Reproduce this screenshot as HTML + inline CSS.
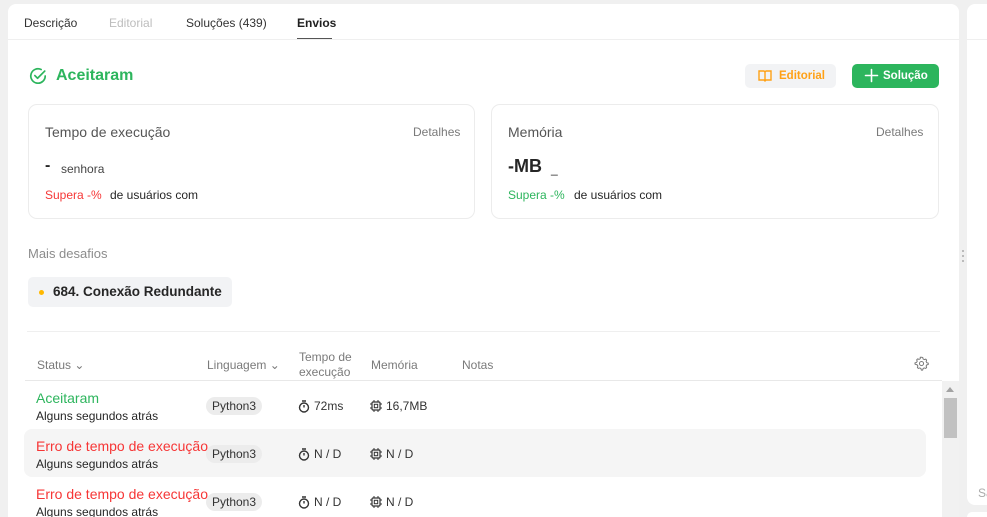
<!DOCTYPE html>
<html><head><meta charset="utf-8"><style>
*{margin:0;padding:0;box-sizing:border-box}
html,body{width:987px;height:517px;overflow:hidden}
body{background:#f0f0f0;font-family:"Liberation Sans",sans-serif;position:relative;color:#262626}
.a{position:absolute;white-space:nowrap}
#main{position:absolute;left:8px;top:4px;width:951px;height:513px;background:#fff;border-radius:8px 8px 0 0;overflow:hidden}
#rp{position:absolute;left:967px;top:4px;width:30px;height:501px;background:#fff;border-radius:8px}
#rp2{position:absolute;left:967px;top:512px;width:30px;height:10px;background:#fff;border-radius:8px}
.tab{font-size:12px;top:12px}
.card{position:absolute;border:1px solid #ececec;border-radius:9px;background:#fff}
.hd{font-size:12px;color:#7a7a7a}
.st{font-size:12px;color:#262626}
.pill{position:absolute;background:#ececec;border-radius:10px;font-size:12px;color:#333;height:18px;line-height:18px;padding:0 6px}
.ic{font-size:12px;color:#333}
</style></head><body>
<div id="main">
  <div class="a tab" style="left:16px;color:#333">Descrição</div>
  <div class="a tab" style="left:101px;color:#bdbdbd">Editorial</div>
  <div class="a tab" style="left:178px;color:#333">Soluções (439)</div>
  <div class="a tab" style="left:289px;color:#1f1f1f;font-weight:700">Envios</div>
  <div class="a" style="left:289px;top:34px;width:35px;height:2px;background:#555"></div>
  <div class="a" style="left:0;top:35px;width:951px;height:1px;background:#efefef"></div>

  <svg class="a" style="left:21px;top:63px" width="18" height="18" viewBox="0 0 20 20"><path d="M18 10A8 8 0 1 1 13.5 2.8" fill="none" stroke="#2db55d" stroke-width="1.9" stroke-linecap="round"/><path d="M6.5 9.5l3 3 8-8" fill="none" stroke="#2db55d" stroke-width="1.9" stroke-linecap="round" stroke-linejoin="round"/></svg>
  <div class="a" style="left:48px;top:63px;font-size:16px;font-weight:700;color:#2db55d">Aceitaram</div>

  <div class="a" style="left:737px;top:60px;width:91px;height:24px;background:#f2f3f5;border-radius:5px"></div>
  <svg class="a" style="left:750px;top:66px" width="14" height="12" viewBox="0 0 14 12"><path d="M1 1h5l1 1 1-1h5v9H8l-1 1-1-1H1z M7 2v8" fill="none" stroke="#ffa116" stroke-width="1.4"/></svg>
  <div class="a" style="left:771px;top:66px;font-size:11.5px;font-weight:700;color:#ffa116">Editorial</div>
  <div class="a" style="left:844px;top:60px;width:87px;height:24px;background:#2cb55d;border-radius:5px"></div>
  <svg class="a" style="left:856px;top:64px" width="15" height="15" viewBox="0 0 15 15"><path d="M7.5 1.5v12M1.5 7.5h12" stroke="#fff" stroke-width="1.6" stroke-linecap="round"/></svg>
  <div class="a" style="left:875px;top:66px;font-size:11.5px;font-weight:700;color:#fff">Solução</div>

  <div class="card" style="left:20px;top:100px;width:447px;height:115px"></div>
  <div class="a" style="left:37px;top:120px;font-size:14px;color:#555">Tempo de execução</div>
  <div class="a hd" style="left:405px;top:121px">Detalhes</div>
  <div class="a" style="left:37px;top:153px;font-size:16px;font-weight:700;color:#262626">-</div>
  <div class="a" style="left:53px;top:158px;font-size:12px;color:#444">senhora</div>
  <div class="a" style="left:37px;top:184px;font-size:12px;color:#f63636">Supera -%</div>
  <div class="a" style="left:102px;top:184px;font-size:12px;color:#262626">de usuários com</div>

  <div class="card" style="left:483px;top:100px;width:448px;height:115px"></div>
  <div class="a" style="left:500px;top:120px;font-size:14px;color:#555">Memória</div>
  <div class="a hd" style="left:868px;top:121px">Detalhes</div>
  <div class="a" style="left:500px;top:152px;font-size:18px;font-weight:600;color:#262626">-MB</div>
  <div class="a" style="left:543px;top:158px;font-size:12px;color:#262626">_</div>
  <div class="a" style="left:500px;top:184px;font-size:12px;color:#2db55d">Supera -%</div>
  <div class="a" style="left:566px;top:184px;font-size:12px;color:#262626">de usuários com</div>

  <div class="a" style="left:20px;top:242px;font-size:13px;color:#8c8c8c">Mais desafios</div>
  <div class="a" style="left:20px;top:273px;width:204px;height:30px;background:#f2f3f5;border-radius:5px"></div>
  <div class="a" style="left:31px;top:286px;width:5px;height:5px;border-radius:50%;background:#ffb800"></div>
  <div class="a" style="left:45px;top:280px;font-size:13.5px;font-weight:600;color:#262626">684. Conexão Redundante</div>

  <div class="a" style="left:19px;top:327px;width:913px;height:1px;background:#efefef"></div>

  <div class="a hd" style="left:29px;top:354px">Status ⌄</div>
  <div class="a hd" style="left:199px;top:354px">Linguagem ⌄</div>
  <div class="a hd" style="left:291px;top:346px;line-height:15px;white-space:normal;width:60px">Tempo de execução</div>
  <div class="a hd" style="left:363px;top:354px">Memória</div>
  <div class="a hd" style="left:454px;top:354px">Notas</div>
  <svg class="a" style="left:906px;top:352px" width="15" height="15" viewBox="0 0 24 24"><path d="M12 2l2 .3.6 2.5 1.8 1 2.4-.8 1.4 1.5-.8 2.4 1 1.8 2.4.7v2.2l-2.4.6-1 1.8.8 2.4-1.5 1.5-2.4-.8-1.8 1-.6 2.4h-2.2l-.6-2.4-1.8-1-2.4.8-1.5-1.5.8-2.4-1-1.8L1.6 13v-2.1l2.5-.6 1-1.8-.8-2.4 1.5-1.5 2.4.8 1.8-1L10 2z" fill="none" stroke="#777" stroke-width="1.6" stroke-linejoin="round"/><circle cx="12" cy="12" r="3.3" fill="none" stroke="#777" stroke-width="1.6"/></svg>
  <div class="a" style="left:17px;top:376px;width:917px;height:1px;background:#e8e8e8"></div>

  <div class="a" style="left:16px;top:425px;width:902px;height:48px;background:#f5f5f5;border-radius:8px"></div>

  <div class="a" style="left:28px;top:386px;font-size:14px;color:#2db55d">Aceitaram</div>
  <div class="a st" style="left:28px;top:405px">Alguns segundos atrás</div>
  <div class="pill" style="left:198px;top:393px">Python3</div>
  <svg class="a" style="left:290px;top:396px" width="12" height="13" viewBox="0 0 12 13"><circle cx="6" cy="7.5" r="4.5" fill="none" stroke="#333" stroke-width="1.4"/><path d="M4 1h4M6 7.5V5" stroke="#333" stroke-width="1.4"/></svg>
  <div class="a ic" style="left:306px;top:395px">72ms</div>
  <svg class="a" style="left:362px;top:396px" width="12" height="12" viewBox="0 0 12 12"><rect x="2" y="2" width="8" height="8" rx="1" fill="none" stroke="#333" stroke-width="1.2"/><rect x="4.3" y="4.3" width="3.4" height="3.4" fill="none" stroke="#333" stroke-width="1"/><path d="M4 0v2M8 0v2M4 10v2M8 10v2M0 4h2M0 8h2M10 4h2M10 8h2" stroke="#333"/></svg>
  <div class="a ic" style="left:378px;top:395px">16,7MB</div>

  <div class="a" style="left:28px;top:434px;font-size:14px;color:#f63636">Erro de tempo de execução</div>
  <div class="a st" style="left:28px;top:453px">Alguns segundos atrás</div>
  <div class="pill" style="left:198px;top:441px">Python3</div>
  <svg class="a" style="left:290px;top:444px" width="12" height="13" viewBox="0 0 12 13"><circle cx="6" cy="7.5" r="4.5" fill="none" stroke="#333" stroke-width="1.4"/><path d="M4 1h4M6 7.5V5" stroke="#333" stroke-width="1.4"/></svg>
  <div class="a ic" style="left:306px;top:443px">N / D</div>
  <svg class="a" style="left:362px;top:444px" width="12" height="12" viewBox="0 0 12 12"><rect x="2" y="2" width="8" height="8" rx="1" fill="none" stroke="#333" stroke-width="1.2"/><rect x="4.3" y="4.3" width="3.4" height="3.4" fill="none" stroke="#333" stroke-width="1"/><path d="M4 0v2M8 0v2M4 10v2M8 10v2M0 4h2M0 8h2M10 4h2M10 8h2" stroke="#333"/></svg>
  <div class="a ic" style="left:378px;top:443px">N / D</div>

  <div class="a" style="left:28px;top:482px;font-size:14px;color:#f63636">Erro de tempo de execução</div>
  <div class="a st" style="left:28px;top:501px">Alguns segundos atrás</div>
  <div class="pill" style="left:198px;top:489px">Python3</div>
  <svg class="a" style="left:290px;top:492px" width="12" height="13" viewBox="0 0 12 13"><circle cx="6" cy="7.5" r="4.5" fill="none" stroke="#333" stroke-width="1.4"/><path d="M4 1h4M6 7.5V5" stroke="#333" stroke-width="1.4"/></svg>
  <div class="a ic" style="left:306px;top:491px">N / D</div>
  <svg class="a" style="left:362px;top:492px" width="12" height="12" viewBox="0 0 12 12"><rect x="2" y="2" width="8" height="8" rx="1" fill="none" stroke="#333" stroke-width="1.2"/><rect x="4.3" y="4.3" width="3.4" height="3.4" fill="none" stroke="#333" stroke-width="1"/><path d="M4 0v2M8 0v2M4 10v2M8 10v2M0 4h2M0 8h2M10 4h2M10 8h2" stroke="#333"/></svg>
  <div class="a ic" style="left:378px;top:491px">N / D</div>

  <div class="a" style="left:934px;top:377px;width:17px;height:140px;background:#f1f1f1"></div>
  <div class="a" style="left:938px;top:383px;width:0;height:0;border-left:4px solid transparent;border-right:4px solid transparent;border-bottom:5px solid #a3a3a3"></div>
  <div class="a" style="left:936px;top:394px;width:13px;height:40px;background:#c1c1c1"></div>
</div>
<div class="a" style="left:962px;top:250px;width:2px;height:2px;background:#bbb;box-shadow:0 5px #bbb,0 10px #bbb"></div>
<div id="rp"><div class="a" style="left:0;top:35px;width:30px;height:1px;background:#efefef"></div><div class="a" style="left:11px;top:482px;font-size:12px;color:#aaa">Sa</div></div>
<div id="rp2"></div>
</body></html>
